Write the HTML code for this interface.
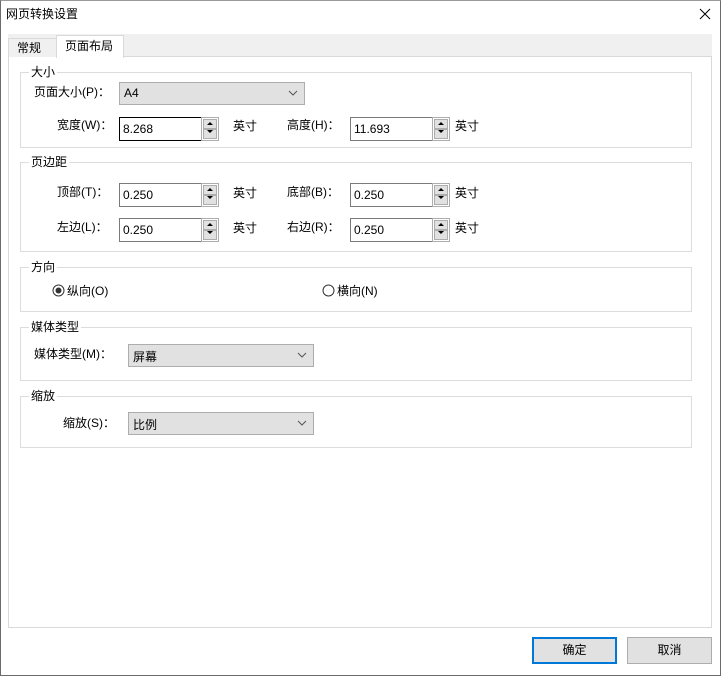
<!DOCTYPE html>
<html><head><meta charset="utf-8"><style>
*{box-sizing:border-box;margin:0;padding:0}
body{width:721px;height:676px;background:#fff;font-family:"Liberation Sans","Noto Sans CJK SC",sans-serif;font-size:12px;color:#000;position:relative;overflow:hidden}
.a{position:absolute;white-space:nowrap}
.win{position:absolute;left:0;top:0;width:721px;height:676px;border:1px solid #6b6b6b;border-top-color:#999}
.grp{position:absolute;left:20px;width:672px;border:1px solid #dcdcdc}
.gt{position:absolute;background:#fff;padding:0 2px;font-size:12px;line-height:14px}
.inp{position:absolute;height:24px;border:1px solid #7a7a7a;background:#fff;padding:4px 0 0 3px;font-size:12px}
.spin{position:absolute;width:18px;height:24px;border:1px solid #adadad;background:#fff}
.spin i{position:absolute;left:1px;width:14px;height:10px;background:#e1e1e1;border:1px solid #adadad}
.cb{position:absolute;height:23px;border:1px solid #adadad;background:#e1e1e1;padding:3px 0 0 4px;font-size:12px}
.cb svg{position:absolute;right:6px;top:7px}
.btn{position:absolute;height:27px;width:85px;border:1px solid #adadad;background:#e1e1e1;text-align:center;line-height:25px;font-size:12px}
</style></head><body>
<div class="win"></div>
<div class="a" style="left:6px;top:5px;font-size:12px">网页转换设置</div>
<svg class="a" style="left:699px;top:8px" width="12" height="12"><path d="M1 1L11 11M11 1L1 11" stroke="#000" stroke-width="1"/></svg>
<div class="a" style="left:8px;top:34px;width:704px;height:23px;background:#f0f0f0"></div>
<div class="a" style="left:8px;top:56px;width:704px;height:572px;border:1px solid #d9d9d9;background:#fff"></div>
<div class="a" style="left:8px;top:38px;width:49px;height:19px;border:1px solid #d9d9d9;border-bottom:none;background:#f0f0f0;padding:0 0 0 8px">常规</div>
<div class="a" style="left:56px;top:35px;width:68px;height:23px;border:1px solid #d9d9d9;border-bottom:none;background:#fff;padding:1px 0 0 8px">页面布局</div>

<div class="grp" style="top:72px;height:76px"></div><div class="gt a" style="left:29px;top:65px">大小</div>
<div class="grp" style="top:162px;height:90px"></div><div class="gt a" style="left:29px;top:155px">页边距</div>
<div class="grp" style="top:267px;height:45px"></div><div class="gt a" style="left:29px;top:260px">方向</div>
<div class="grp" style="top:327px;height:54px"></div><div class="gt a" style="left:29px;top:320px">媒体类型</div>
<div class="grp" style="top:396px;height:52px"></div><div class="gt a" style="left:29px;top:389px">缩放</div>

<div class="a" style="left:34px;top:83px">页面大小(P)：</div>
<div class="cb" style="left:119px;top:82px;width:186px">A4<svg width="10" height="6"><path d="M1 1L5 5L9 1" fill="none" stroke="#555"/></svg></div>

<div class="a" style="left:57px;top:116px">宽度(W)：</div>
<div class="inp" style="left:119px;top:117px;width:83px;border-color:#000">8.268</div>
<div class="a" style="left:233px;top:117px">英寸</div>
<div class="a" style="left:287px;top:116px">高度(H)：</div>
<div class="inp" style="left:350px;top:117px;width:83px">11.693</div>
<div class="a" style="left:455px;top:117px">英寸</div>

<div class="a" style="left:57px;top:183px">顶部(T)：</div>
<div class="inp" style="left:119px;top:183px;width:83px">0.250</div>
<div class="a" style="left:233px;top:184px">英寸</div>
<div class="a" style="left:287px;top:183px">底部(B)：</div>
<div class="inp" style="left:350px;top:183px;width:83px">0.250</div>
<div class="a" style="left:455px;top:184px">英寸</div>

<div class="a" style="left:57px;top:218px">左边(L)：</div>
<div class="inp" style="left:119px;top:218px;width:83px">0.250</div>
<div class="a" style="left:233px;top:219px">英寸</div>
<div class="a" style="left:287px;top:218px">右边(R)：</div>
<div class="inp" style="left:350px;top:218px;width:83px">0.250</div>
<div class="a" style="left:455px;top:219px">英寸</div>

<div class="spin" style="left:201px;top:117px"><i style="top:1px"></i><i style="top:11px"></i></div>
<div class="spin" style="left:432px;top:117px"><i style="top:1px"></i><i style="top:11px"></i></div>
<div class="spin" style="left:201px;top:183px"><i style="top:1px"></i><i style="top:11px"></i></div>
<div class="spin" style="left:432px;top:183px"><i style="top:1px"></i><i style="top:11px"></i></div>
<div class="spin" style="left:201px;top:218px"><i style="top:1px"></i><i style="top:11px"></i></div>
<div class="spin" style="left:432px;top:218px"><i style="top:1px"></i><i style="top:11px"></i></div>
<svg class="a" style="left:0;top:0" width="721" height="300">
<g fill="#000">
<path d="M207 125h6l-3-3z M207 130h6l-3 3z"/>
<path d="M438 125h6l-3-3z M438 130h6l-3 3z"/>
<path d="M207 191h6l-3-3z M207 196h6l-3 3z"/>
<path d="M438 191h6l-3-3z M438 196h6l-3 3z"/>
<path d="M207 226h6l-3-3z M207 231h6l-3 3z"/>
<path d="M438 226h6l-3-3z M438 231h6l-3 3z"/>
</g>
<circle cx="58.5" cy="290.5" r="5.5" fill="#fff" stroke="#333"/>
<circle cx="58.5" cy="290.5" r="3" fill="#333"/>
<circle cx="328.5" cy="290.5" r="5.5" fill="#fff" stroke="#333"/>
</svg>
<div class="a" style="left:67px;top:282px">纵向(O)</div>
<div class="a" style="left:337px;top:282px">横向(N)</div>

<div class="a" style="left:34px;top:345px">媒体类型(M)：</div>
<div class="cb" style="left:128px;top:344px;width:186px">屏幕<svg width="10" height="6"><path d="M1 1L5 5L9 1" fill="none" stroke="#555"/></svg></div>
<div class="a" style="left:63px;top:414px">缩放(S)：</div>
<div class="cb" style="left:128px;top:412px;width:186px">比例<svg width="10" height="6"><path d="M1 1L5 5L9 1" fill="none" stroke="#555"/></svg></div>

<div class="btn" style="left:532px;top:637px;border:2px solid #0078d7;line-height:23px">确定</div>
<div class="btn" style="left:627px;top:637px">取消</div>
</body></html>
